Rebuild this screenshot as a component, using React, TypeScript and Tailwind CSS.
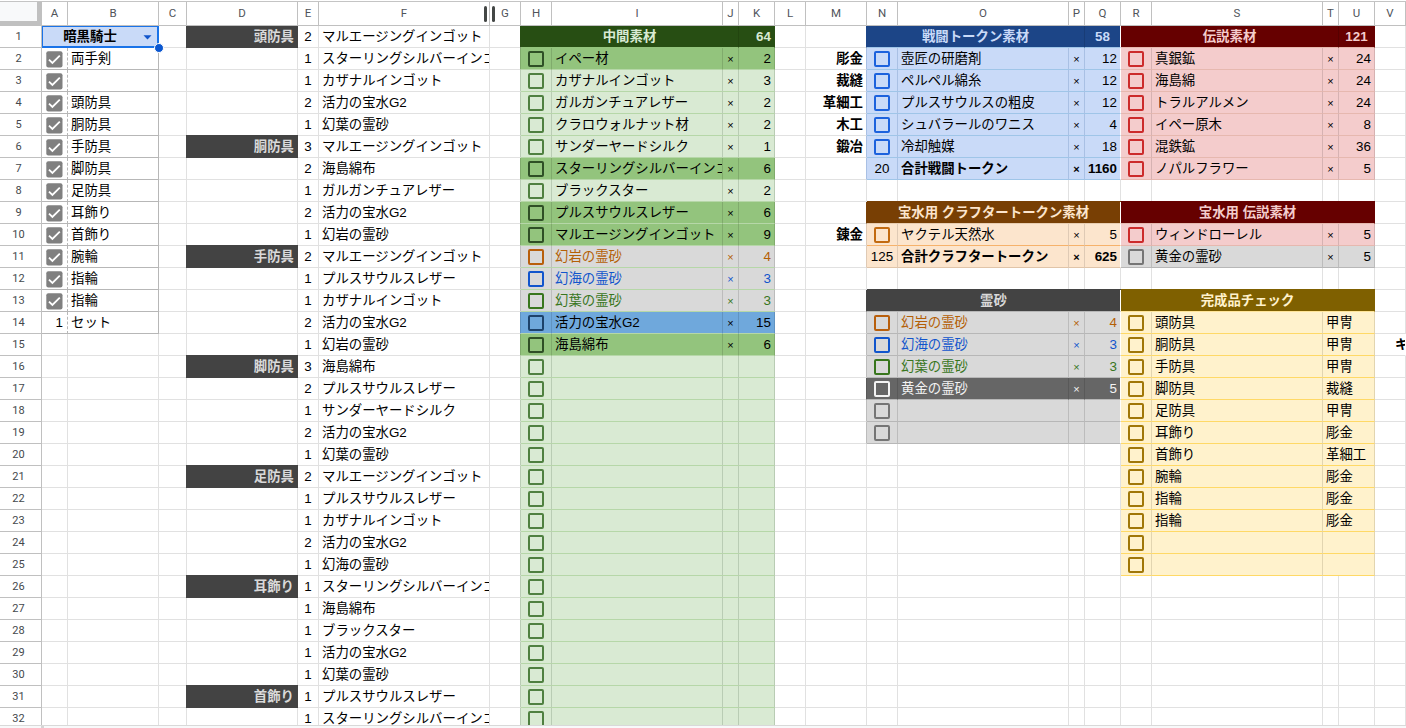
import clsx from "clsx";

type Cell = {
  text?: string;
  className?: string;
  box?: string;
  checked?: boolean;
  span?: string;
};

const COLS = "ABCDEFGHIJKLMNOPQRSTUV".split("");
const ROWS = Array.from({ length: 32 }, (_, i) => i + 1);

const GRID =
  "grid grid-cols-[42px_26px_91px_28px_111px_21px_171px_31px_31px_171px_16px_36px_31px_61px_31px_171px_16px_36px_31px_171px_16px_36px_31px]";

const cells: Record<string, Cell> = {};
const skip = new Set<string>();

const RIGHT = "justify-end pr-[3px]";
const LEFT = "pl-[3px]";
const CENTER = "justify-center";

// checklist (A:B)
const checks = ["両手剣", "", "頭防具", "胴防具", "手防具", "脚防具", "足防具", "耳飾り", "首飾り", "腕輪", "指輪", "指輪"];
cells.A1 = {
  text: "暗黒騎士",
  span: "col-span-2",
  className: "bg-[#c9daf8] font-bold justify-center pr-5 border-[#b7b7b7]",
};
skip.add("B1");
checks.forEach((text, i) => {
  cells[`A${i + 2}`] = { checked: true, className: "border-b-[#b7b7b7] border-r-[#b7b7b7] [border-right-style:dashed]" };
  cells[`B${i + 2}`] = { text, className: clsx(LEFT, "border-[#b7b7b7]") };
});
cells.A14 = { text: "1", className: "justify-end pr-1 border-b-[#b7b7b7] border-r-[#b7b7b7] [border-right-style:dashed]" };
cells.B14 = { text: "セット", className: clsx(LEFT, "border-[#b7b7b7]") };

// recipes (D:F)
const recipes: [string, [number, string][]][] = [
  ["頭防具", [[2, "マルエージングインゴット"], [1, "スターリングシルバーインゴット"], [1, "カザナルインゴット"], [2, "活力の宝水G2"], [1, "幻葉の霊砂"]]],
  ["胴防具", [[3, "マルエージングインゴット"], [2, "海島綿布"], [1, "ガルガンチュアレザー"], [2, "活力の宝水G2"], [1, "幻岩の霊砂"]]],
  ["手防具", [[2, "マルエージングインゴット"], [1, "プルスサウルスレザー"], [1, "カザナルインゴット"], [2, "活力の宝水G2"], [1, "幻岩の霊砂"]]],
  ["脚防具", [[3, "海島綿布"], [2, "プルスサウルスレザー"], [1, "サンダーヤードシルク"], [2, "活力の宝水G2"], [1, "幻葉の霊砂"]]],
  ["足防具", [[2, "マルエージングインゴット"], [1, "プルスサウルスレザー"], [1, "カザナルインゴット"], [2, "活力の宝水G2"], [1, "幻海の霊砂"]]],
  ["耳飾り", [[1, "スターリングシルバーインゴット"], [1, "海島綿布"], [1, "ブラックスター"], [1, "活力の宝水G2"], [1, "幻葉の霊砂"]]],
  ["首飾り", [[1, "プルスサウルスレザー"], [1, "スターリングシルバーインゴット"]]],
];
recipes.forEach(([name, items], r) => {
  const top = r * 5 + 1;
  cells[`D${top}`] = {
    text: name,
    className: clsx(
      RIGHT,
      "bg-[#434343] border-[#434343] text-[#d9d9d9] font-bold shadow-[-1px_-1px_0_#434343,-1px_0_0_#434343,0_-1px_0_#434343]"
    ),
  };
  items.forEach(([n, item], i) => {
    cells[`E${top + i}`] = { text: String(n), className: CENTER };
    cells[`F${top + i}`] = { text: item, className: LEFT };
  });
});

const THEMES = {
  green: "bg-[#d9ead3] border-b-[#b6d7a8] border-r-[#b9ccb4]",
  greenDark: "bg-[#93c47d] border-b-[#b6d7a8] border-r-[#80ab6c]",
  greenGray: "bg-[#d9d9d9] border-b-[#b6d7a8] border-r-[#bcbcbc]",
  greenBlue: "bg-[#6fa8dc] border-b-[#b6d7a8] border-r-[#6093c1]",
  blue: "bg-[#c9daf8] border-b-[#9fc5e8] border-r-[#a9c0e4]",
  red: "bg-[#f4cccc] border-b-[#e6b8af] border-r-[#d6b2b2]",
  orange: "bg-[#fce5cd] border-b-[#f6b26b] border-r-[#dfcab5]",
  orangeEnd: "bg-[#fce5cd] border-b-[#e0c4a8] border-r-[#dfcab5]",
  gray: "bg-[#d9d9d9] border-b-[#b7b7b7] border-r-[#bcbcbc]",
  grayDark: "bg-[#666666] border-b-[#b7b7b7] border-r-[#595959]",
  yellow: "bg-[#fff2cc] border-b-[#ffd966] border-r-[#e2d5b0]",
};

const EDGES: Record<string, string> = {
  green: "border-r-[#b9ccb4]",
  greenDark: "border-r-[#80ab6c]",
  greenGray: "border-r-[#bcbcbc]",
  greenBlue: "border-r-[#6093c1]",
  blue: "border-r-[#a9c0e4]",
  orange: "border-r-[#dfcab5]",
  orangeEnd: "border-r-[#dfcab5]",
  gray: "border-r-[#bcbcbc]",
  grayDark: "border-r-[#595959]",
};

const BOX = {
  green: "border-[#4f8040]",
  greenDark: "border-[#2f4f26]",
  orange: "border-[#b85f0c]",
  orangeLight: "border-[#c26a10]",
  blue: "border-[#1155cc]",
  blueLight: "border-[#1c62dd]",
  leaf: "border-[#38761d]",
  navy: "border-[#1d426b]",
  red: "border-[#cc2b2b]",
  gray: "border-[#757575]",
  white: "border-[#f3f3f3]",
  yellow: "border-[#a07708]",
};

type Theme = keyof typeof THEMES;

const edge = (col: string, row: number, className: string) => {
  const key = `${col}${row}`;
  cells[key] = { ...cells[key], className: clsx(cells[key]?.className, className) };
};

// one four column line: checkbox, name, ×, amount
const line = (start: string, row: number, theme: Theme, box: string, name = "", count = "", text = "") => {
  const i = COLS.indexOf(start);
  const [a, b, c, d] = COLS.slice(i, i + 4);
  const base = clsx(THEMES[theme], text);
  cells[`${a}${row}`] = { box, className: clsx(base, CENTER) };
  cells[`${b}${row}`] = { text: name, className: clsx(base, LEFT) };
  cells[`${c}${row}`] = { text: count && "×", className: clsx(base, CENTER, "text-[11px]") };
  cells[`${d}${row}`] = { text: count, className: clsx(base, RIGHT, start === "N" && "border-r-white!") };
  if (start !== "R") edge(COLS[i - 1], row, EDGES[theme]);
};

const intermediates: [Theme, string, string, string, string?][] = [
  ["greenDark", BOX.greenDark, "イペー材", "2"],
  ["green", BOX.green, "カザナルインゴット", "3"],
  ["green", BOX.green, "ガルガンチュアレザー", "2"],
  ["green", BOX.green, "クラロウォルナット材", "2"],
  ["green", BOX.green, "サンダーヤードシルク", "1"],
  ["greenDark", BOX.greenDark, "スターリングシルバーインゴット", "6"],
  ["green", BOX.green, "ブラックスター", "2"],
  ["greenDark", BOX.greenDark, "プルスサウルスレザー", "6"],
  ["greenDark", BOX.greenDark, "マルエージングインゴット", "9"],
  ["greenGray", BOX.orange, "幻岩の霊砂", "4", "text-[#b45f06]"],
  ["greenGray", BOX.blue, "幻海の霊砂", "3", "text-[#1155cc]"],
  ["greenGray", BOX.leaf, "幻葉の霊砂", "3", "text-[#38761d]"],
  ["greenBlue", BOX.navy, "活力の宝水G2", "15"],
  ["greenDark", BOX.greenDark, "海島綿布", "6"],
];
intermediates.forEach(([theme, box, name, n, text], i) => line("H", i + 2, theme, box, name, n, text));
for (let row = 16; row <= 32; row++) line("H", row, "green", BOX.green);

cells.H1 = { text: "中間素材", span: "col-span-3", className: "justify-center font-bold bg-[#274e13] border-r-[#22450f] border-b-[#93c47d] text-[#d9ead3]" };
cells.K1 = { text: "64", className: clsx(RIGHT, "font-bold bg-[#274e13] border-r-[#274e13] border-b-[#93c47d] text-[#d9ead3]") };
edge("G", 1, "border-r-[#274e13]");

// battle tokens
cells.N1 = { text: "戦闘トークン素材", span: "col-span-3", className: "justify-center font-bold bg-[#1c4587] border-r-[#183c76] border-b-[#9fc5e8] text-[#c9daf8]" };
cells.Q1 = { text: "58", className: "justify-center font-bold bg-[#1c4587] border-r-white border-b-[#9fc5e8] text-[#c9daf8]" };
edge("M", 1, "border-r-[#1c4587]");
[
  ["壺匠の研磨剤", "12", "彫金"],
  ["ペルペル綿糸", "12", "裁縫"],
  ["プルスサウルスの粗皮", "12", "革細工"],
  ["シュバラールのワニス", "4", "木工"],
  ["冷却触媒", "18", "鍛冶"],
].forEach(([name, n, job], i) => {
  cells[`M${i + 2}`] = { text: job, className: clsx(RIGHT, "font-bold") };
  line("N", i + 2, "blue", BOX.blueLight, name, n);
});
line("N", 7, "blue", "", "合計戦闘トークン", "1160", "font-bold");
cells.N7 = { text: "20", className: clsx(THEMES.blue, CENTER) };

// legendary materials
cells.R1 = { text: "伝説素材", span: "col-span-3", className: "justify-center font-bold bg-[#660000] border-r-[#570000] border-b-[#e6b8af] text-[#f4cccc]" };
cells.U1 = { text: "121", className: "justify-center font-bold bg-[#660000] border-r-[#660000] border-b-[#e6b8af] text-[#f4cccc]" };
[
  ["真銀鉱", "24"],
  ["海島綿", "24"],
  ["トラルアルメン", "24"],
  ["イペー原木", "8"],
  ["混鉄鉱", "36"],
  ["ノパルフラワー", "5"],
].forEach(([name, n], i) => line("R", i + 2, "red", BOX.red, name, n));

// crafter tokens
cells.N9 = { text: "宝水用 クラフタートークン素材", span: "col-span-4", className: "justify-center font-bold bg-[#783f04] border-r-white border-b-[#e8cdb0] text-[#fce5cd] shadow-[0_-1px_0_#783f04]" };
edge("M", 9, "border-r-[#783f04]");
cells.M10 = { text: "錬金", className: clsx(RIGHT, "font-bold") };
line("N", 10, "orange", BOX.orangeLight, "ヤクテル天然水", "5");
line("N", 11, "orangeEnd", "", "合計クラフタートークン", "625", "font-bold");
cells.N11 = { text: "125", className: clsx(THEMES.orangeEnd, CENTER) };

cells.R9 = { text: "宝水用 伝説素材", span: "col-span-4", className: "justify-center font-bold bg-[#660000] border-r-[#660000] border-b-[#e6b8af] text-[#f4cccc] shadow-[0_-1px_0_#660000]" };
line("R", 10, "red", BOX.red, "ウィンドローレル", "5");
line("R", 11, "gray", BOX.gray, "黄金の霊砂", "5");

// sands
cells.N13 = { text: "霊砂", span: "col-span-4", className: "justify-center font-bold bg-[#434343] border-r-white border-b-[#b7b7b7] text-[#d9d9d9] shadow-[0_-1px_0_#434343]" };
edge("M", 13, "border-r-[#434343]");
line("N", 14, "gray", BOX.orange, "幻岩の霊砂", "4", "text-[#b45f06]");
line("N", 15, "gray", BOX.blue, "幻海の霊砂", "3", "text-[#1155cc]");
line("N", 16, "gray", BOX.leaf, "幻葉の霊砂", "3", "text-[#38761d]");
line("N", 17, "grayDark", BOX.white, "黄金の霊砂", "5", "text-[#f3f3f3]");
line("N", 18, "gray", BOX.gray);
line("N", 19, "gray", BOX.gray);

// finished items
cells.R13 = { text: "完成品チェック", span: "col-span-4", className: "justify-center font-bold bg-[#7f6000] border-r-[#7f6000] border-b-[#ffe599] text-[#fff2cc] shadow-[0_-1px_0_#7f6000]" };
[
  ["頭防具", "甲冑"],
  ["胴防具", "甲冑"],
  ["手防具", "甲冑"],
  ["脚防具", "裁縫"],
  ["足防具", "甲冑"],
  ["耳飾り", "彫金"],
  ["首飾り", "革細工"],
  ["腕輪", "彫金"],
  ["指輪", "彫金"],
  ["指輪", "彫金"],
  ["", ""],
  ["", ""],
].forEach(([name, job], i) => {
  const row = i + 14;
  line("R", row, "yellow", BOX.yellow, name);
  cells[`T${row}`] = { text: job, span: "col-span-2", className: clsx(THEMES.yellow, LEFT) };
  skip.add(`U${row}`);
});
cells.V15 = { text: "キ", className: "font-bold pl-5 border-r-white" };

["I1", "J1", "O1", "P1", "S1", "T1"].forEach((k) => skip.add(k));
["O", "P", "Q"].forEach((c) => [9, 13].forEach((r) => skip.add(`${c}${r}`)));
["S", "T", "U"].forEach((c) => [9, 13].forEach((r) => skip.add(`${c}${r}`)));

const CheckedBox = () => (
  <svg className="ml-1 mt-[2px] h-[17px] w-[17px] shrink-0" viewBox="0 0 17 17">
    <rect x="0.3" y="0.3" width="16.2" height="16.2" rx="2" fill="#808080" />
    <path d="M3 8.6 6.4 12 13.8 4.6" fill="none" stroke="#fff" strokeWidth="1.8" />
  </svg>
);

const GridCell = ({ cell }: { cell?: Cell }) => (
  <div
    className={clsx(
      "flex h-[22px] min-w-0 items-center overflow-hidden whitespace-nowrap border-b border-r",
      !/border-\[#|border-b-/.test(cell?.className ?? "") && "border-b-[#e1e1e1]",
      !/border-\[#|border-r-/.test(cell?.className ?? "") && "border-r-[#e1e1e1]",
      cell?.span,
      cell?.className
    )}
  >
    {cell?.checked && <CheckedBox />}
    {cell?.box && <span className={clsx("mt-px h-4 w-4 shrink-0 rounded-[2px] border-2", cell.box)} />}
    {cell?.text}
  </div>
);

const Header = () => (
  <div className={clsx(GRID, "relative z-10 mt-px border-t border-[#c4c4c4] bg-white font-['Roboto',sans-serif] text-[11.5px] text-[#50545a]")}>
    <div className="h-6 border-b-[5px] border-r-[5px] border-[#c0c0c0] bg-[#f8f9fa]" />
    {COLS.map((col) => (
      <div key={col} className="flex h-6 items-center justify-center border-b border-r border-[#c0c0c0] pb-px">
        {col}
      </div>
    ))}
    <div className="absolute left-[484px] top-1 flex h-4 gap-[5px]">
      <span className="w-[3px] rounded-sm bg-[#444746]" />
      <span className="w-[3px] rounded-sm bg-[#444746]" />
    </div>
  </div>
);

const Selection = () => (
  <div className="absolute left-[42px] top-0 h-[22px] w-[117px] border-b-2 border-l border-r-2 border-t border-[#1a73e8]">
    <svg className="absolute right-[5px] top-2 h-[5px] w-[9px]" viewBox="0 0 9 5">
      <path d="M0.5 0.3h8L4.5 4.6z" fill="#1155cc" />
    </svg>
    <span className="absolute -bottom-[7px] -right-[7px] h-[10px] w-[10px] rounded-full border border-white bg-[#0b57d0]" />
  </div>
);

export default function App() {
  return (
    <div className="h-[728px] w-[1406px] overflow-hidden bg-white font-['Liberation_Sans','Noto_Sans_CJK_JP',sans-serif] text-[13.4px] leading-[20px] text-black">
      <div className="h-[725px] overflow-hidden">
        <Header />
        <div className="relative">
          <div className={GRID}>
            {ROWS.map((row) => [
              <div
                key={row}
                className="flex h-[22px] items-center justify-center border-b border-r border-[#c0c0c0] pr-1 font-['Roboto',sans-serif] text-[11px] text-[#45494d]"
              >
                {row}
              </div>,
              ...COLS.filter((col) => !skip.has(`${col}${row}`)).map((col) => (
                <GridCell key={`${col}${row}`} cell={cells[`${col}${row}`]} />
              )),
            ])}
          </div>
          <Selection />
        </div>
      </div>
      <div className="flex h-[3px] border-t border-[#d9d9d9] bg-[#f8f9fa]">
        <span className="ml-[41px] w-[3px] bg-[#d5d5d5]" />
      </div>
    </div>
  );
}
